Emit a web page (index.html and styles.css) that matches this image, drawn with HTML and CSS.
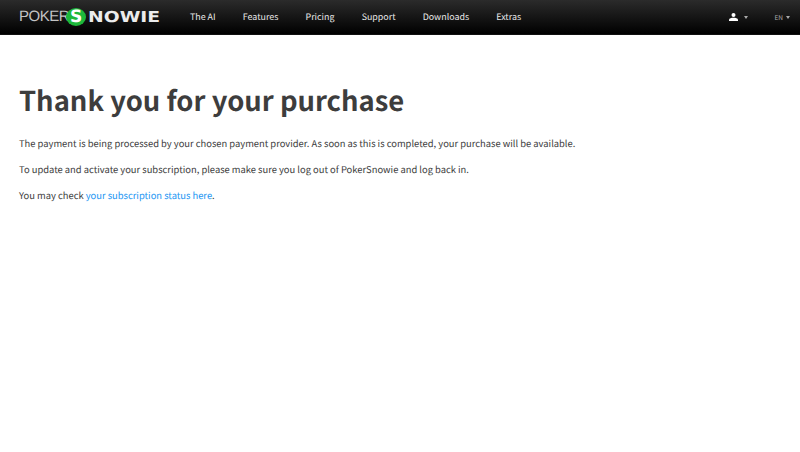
FILE: index.html
```html
<!DOCTYPE html>
<html lang="en">
<head>
<meta charset="utf-8">
<title>Thank you for your purchase</title>
<link rel="stylesheet" href="styles.css">
</head>
<body>
<header class="topbar">
  <a class="logo" href="#" aria-label="PokerSnowie">
    <span class="logo-poker">POKER</span>
    <span class="logo-s">S</span>
    <span class="logo-nowie">NOWIE</span>
  </a>
  <nav class="nav">
    <a href="#">The AI</a>
    <a href="#">Features</a>
    <a href="#">Pricing</a>
    <a href="#">Support</a>
    <a href="#">Downloads</a>
    <a href="#">Extras</a>
  </nav>
  <div class="tools">
    <a class="tool" href="#">
      <svg class="user" width="9" height="8" viewBox="0 0 9 8" aria-hidden="true"><circle cx="4.5" cy="2" r="2" fill="#fff"/><path d="M0 8V6.6C0 5.3 2.6 4.7 4.5 4.7S9 5.3 9 6.6V8Z" fill="#fff"/></svg>
      <span class="caret"></span>
    </a>
    <a class="tool lang" href="#">EN <span class="caret"></span></a>
  </div>
</header>
<main class="content">
  <h1>Thank you for your purchase</h1>
  <p>The payment is being processed by your chosen payment provider. As soon as this is completed, your purchase will be available.</p>
  <p>To update and activate your subscription, please make sure you log out of PokerSnowie and log back in.</p>
  <p>You may check <a href="#">your subscription status here</a>.</p>
</main>
</body>
</html>
```
FILE: styles.css
```css
* { box-sizing: border-box; }
body {
  margin: 0;
  background: #fff;
  color: #3c3c3c;
  font-family: "Noto Sans CJK SC", "Noto Sans", sans-serif;
  font-size: 9.4px;
  text-rendering: geometricPrecision;
}
a { text-decoration: none; }
.topbar {
  height: 35px;
  display: flex;
  align-items: center;
  padding: 0 0 0 19px;
  background: linear-gradient(#2b2b2b, #000);
  border-bottom: 1px solid #111;
}
.logo {
  width: 141px;
  display: flex;
  align-items: center;
  color: #fff;
  line-height: 16px;
}
.logo-poker {
  font-family: "Liberation Sans", sans-serif;
  font-size: 15px;
  letter-spacing: -0.5px;
  color: #c4c4c4;
  width: 47px;
}
.logo-s {
  width: 20px;
  height: 18px;
  border-radius: 50%;
  background: #1db83a;
  color: #fff;
  font: 700 17px/18px "DejaVu Sans", sans-serif;
  text-align: center;
}
.logo-nowie {
  font: 700 15px/16px "DejaVu Sans", sans-serif;
  color: #ececec;
  margin-left: 2px;
  transform: scaleX(1.25);
  transform-origin: left center;
}
.nav {
  display: flex;
  gap: 27.2px;
  margin-left: 30px;
}
.nav a {
  color: #e8e8e8;
  font-size: 8.9px;
  line-height: 16px;
  white-space: nowrap;
}
.tools {
  margin-left: auto;
  display: flex;
  align-items: center;
}
.tool {
  display: flex;
  align-items: center;
  color: #aaa;
}
.tool .user { margin-right: 6px; }
.lang {
  font-size: 6.5px;
  margin-left: 26px;
  margin-right: 10px;
  gap: 3px;
}
.caret {
  width: 0;
  height: 0;
  border-left: 2.5px solid transparent;
  border-right: 2.5px solid transparent;
  border-top: 3.5px solid #aaa;
}
.content { padding: 44px 19px 0; }
h1 {
  margin: 0 0 16px;
  font-size: 27.4px;
  line-height: 40px;
  font-weight: 700;
  color: #3d3d3d;
}
p {
  margin: 0 0 9px;
  line-height: 17px;
}
p a { color: #2196f3; }
```
